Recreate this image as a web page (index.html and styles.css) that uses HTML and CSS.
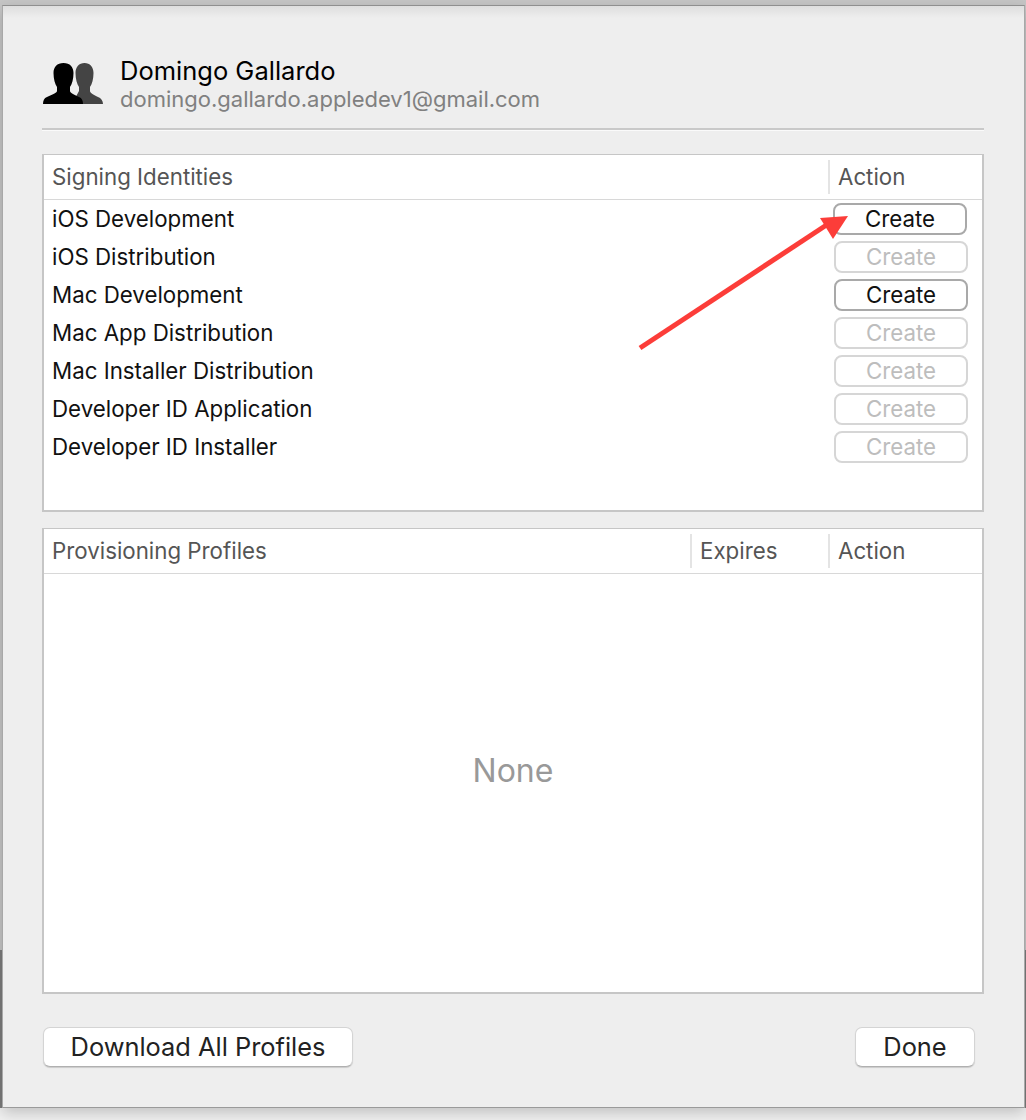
FILE: index.html
```html
<!DOCTYPE html>
<html lang="en">
<head>
	<meta charset="UTF-8">
	<title>Accounts</title>
	<link rel="stylesheet" href="styles.css">
</head>
<body>
	<div id="dialog">
		<div id="account">
			<svg id="usericon" width="62" height="44" viewBox="0 0 62 44">
				<path fill="#444" d="M42.500 1C48 1 51.500 5 51.500 11C51.500 17 50 22 48 25L48 29C48 31 52 33 56 35C59 36 61 39 61 42L30 42L37 29L37 25C35 22 33.500 17 33.500 11C33.500 5 37 1 42.500 1Z"/>
				<path fill="#000" d="M21.500 1C28 1 31.500 5 31.500 11C31.500 17 30 22 28 25L28 29C28 31 33 33 37 35C40 36 41 39 41 42L1 42C1 39 2 36 5 35C9 33 15 31 15 29L15 25C13 22 11.500 17 11.500 11C11.500 5 15 1 21.500 1Z"/>
			</svg>
			<div id="accounttext">
				<div id="username">Domingo Gallardo</div>
				<div id="useremail">domingo.gallardo.appledev1@gmail.com</div>
			</div>
		</div>
		<div id="divider"></div>

		<div class="table" id="identities">
			<div class="tablehead">
				<div class="headcell grow">Signing Identities</div>
				<div class="headcell sep actioncol">Action</div>
			</div>
			<div class="row"><span>iOS Development</span><div class="create first">Create</div></div>
			<div class="row"><span>iOS Distribution</span><div class="create off">Create</div></div>
			<div class="row"><span>Mac Development</span><div class="create">Create</div></div>
			<div class="row"><span>Mac App Distribution</span><div class="create off">Create</div></div>
			<div class="row"><span>Mac Installer Distribution</span><div class="create off">Create</div></div>
			<div class="row"><span>Developer ID Application</span><div class="create off">Create</div></div>
			<div class="row"><span>Developer ID Installer</span><div class="create off">Create</div></div>
		</div>

		<div class="table" id="profiles">
			<div class="tablehead">
				<div class="headcell grow">Provisioning Profiles</div>
				<div class="headcell sep expirescol">Expires</div>
				<div class="headcell sep actioncol">Action</div>
			</div>
			<div id="none">None</div>
		</div>

		<div id="footer">
			<div class="bigbtn" id="downloadall">Download All Profiles</div>
			<div class="bigbtn" id="done">Done</div>
		</div>
	</div>
	<svg id="arrow" width="1026" height="1120" viewBox="0 0 1026 1120">
		<path d="M640 348L828 224" stroke="#fc3d39" stroke-width="5" fill="none"/>
		<path d="M820 218L848 216L833 239Z" fill="#fc3d39"/>
	</svg>
</body>
</html>
```

FILE: styles.css
```css
*{
	box-sizing: border-box;
	font-family: Inter, Roboto, sans-serif;
}
html, body{
	margin: 0;
	height: 1120px;
	overflow: hidden;
}
body{
	background: linear-gradient(#c6c6c6 0, #c6c6c6 950px, #7c7c7c 950px, #7c7c7c 1108px, #f1f1f1 1108px);
	padding-top: 5px;
	padding-left: 2px;
}
#dialog{
	width: 1023px;
	height: 1103px;
	background: linear-gradient(#dedede 0, #eeeeee 12px);
	border-top: 1px solid #8f8f8f;
	border-left: 1px solid #a8a8a8;
	border-right: 1px solid #a8a8a8;
	border-bottom: 1px solid #9a9a9a;
	box-shadow: 0 5px 14px rgba(0, 0, 0, 0.2);
	padding: 0 40px 0 39px;
	display: flex;
	flex-direction: column;
}
#account{
	display: flex;
	align-items: center;
	height: 122px;
	padding-top: 34px;
}
#usericon{
	flex-shrink: 0;
}
#accounttext{
	margin-left: 16px;
}
#username{
	font-size: 25.500px;
	line-height: 30px;
	color: #000;
}
#useremail{
	font-size: 22px;
	line-height: 26px;
	color: #808080;
}
#divider{
	height: 3px;
	background: #c9c9c9;
	border-bottom: 1px solid #fafafa;
	flex-shrink: 0;
}
.table{
	background: #fff;
	border: 2px solid #c6c6c6;
	border-top-width: 1px;
	display: flex;
	flex-direction: column;
}
#identities{
	height: 358px;
	margin-top: 23px;
}
#profiles{
	height: 466px;
	margin-top: 16px;
}
.tablehead{
	display: flex;
	align-items: center;
	height: 45px;
	border-bottom: 1px solid #d8d8d8;
	flex-shrink: 0;
}
.headcell{
	font-size: 22.300px;
	line-height: 34px;
	color: #555;
	padding-left: 8px;
}
.grow{
	flex-grow: 1;
}
.sep{
	border-left: 2px solid #e4e4e4;
}
.actioncol{
	width: 154px;
}
.expirescol{
	width: 138px;
}
.row{
	display: flex;
	align-items: center;
	justify-content: space-between;
	height: 38px;
	padding-left: 8px;
	padding-right: 14px;
	font-size: 22.300px;
	color: #111;
}
.row span{
	padding-bottom: 2px;
}
.create{
	width: 134px;
	height: 32px;
	border: 2px solid #a9a9a9;
	border-radius: 8px;
	text-align: center;
	line-height: 28px;
	font-size: 22.300px;
	color: #111;
	background: #fff;
}
.create.first{
	margin-right: 1px;
}
.create.off{
	border-color: #d6d6d6;
	color: #bdbdbd;
}
#none{
	flex-grow: 1;
	display: flex;
	align-items: center;
	justify-content: center;
	padding-bottom: 26px;
	font-size: 32px;
	color: #999;
}
#footer{
	display: flex;
	justify-content: space-between;
	margin-top: 33px;
	padding-left: 1px;
	padding-right: 9px;
}
.bigbtn{
	height: 40px;
	background: #fff;
	border-radius: 7px;
	border: 1px solid #d4d4d4;
	border-bottom-color: #b0b0b0;
	box-shadow: 0 1px 1px rgba(0, 0, 0, 0.15);
	font-size: 25.400px;
	line-height: 38px;
	text-align: center;
	color: #222;
}
#downloadall{
	width: 310px;
}
#done{
	width: 120px;
}
#arrow{
	position: absolute;
	left: 0;
	top: 0;
	pointer-events: none;
}
```
